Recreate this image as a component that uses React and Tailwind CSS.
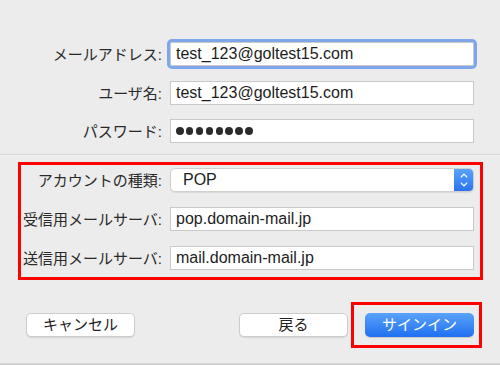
import { ChevronDown, ChevronUp } from "lucide-react";

const font = {
  jp: "font-['Helvetica','Liberation_Sans','Noto_Sans_CJK_JP',sans-serif]",
};

function Label({ children, className = "" }) {
  return (
    <div
      className={`shrink-0 text-right text-[15px] leading-none text-[#2a2a2a] ${className}`}
    >
      {children}
    </div>
  );
}

function Field({ children, focused = false }) {
  return (
    <div
      className={`ml-[8px] flex h-[24px] w-[304px] items-center border border-[#c9c9c9] bg-white pl-[5px] text-[16px] text-[#1d1d1d] ${
        focused ? "rounded-[2px] outline-[3px] outline-[#7fa6ea] outline-offset-0 border-[#9db8e6]" : ""
      }`}
    >
      {children}
    </div>
  );
}

function Popup({ value }) {
  return (
    <div className="ml-[8px] flex h-[24px] w-[304px] items-stretch rounded-[5px] border border-[#cfcfcf] bg-white shadow-[0_1px_1px_rgba(0,0,0,0.08)]">
      <div className="flex flex-1 items-center pl-[12px] text-[16px] text-[#1d1d1d]">
        {value}
      </div>
      <div className="flex w-[19px] flex-col items-center justify-center rounded-r-[4px] bg-gradient-to-b from-[#5ba2f8] to-[#2a73ef]">
        <ChevronUp className="-mb-[2px] h-[11px] w-[12px] text-white" strokeWidth={3} />
        <ChevronDown className="h-[11px] w-[12px] text-white" strokeWidth={3} />
      </div>
    </div>
  );
}

function Button({ children, primary = false }) {
  return (
    <button
      type="button"
      className={`flex h-[24px] w-[109px] items-center justify-center rounded-[5px] text-[15px] ${
        primary
          ? "bg-gradient-to-b from-[#5aa2f9] to-[#1f6ff1] text-white shadow-[0_1px_1px_rgba(0,0,0,0.15)]"
          : "border border-[#cdcdcd] bg-white text-[#222] shadow-[0_1px_1px_rgba(0,0,0,0.1)]"
      }`}
    >
      {children}
    </button>
  );
}

export default function App() {
  return (
    <div
      className={`flex h-[365px] w-[500px] flex-col overflow-hidden bg-[#ececec] ${font.jp}`}
    >
      {/* account fields */}
      <div className="pt-[42px]">
        <div className="flex items-center">
          <Label className="w-[162px]">メールアドレス:</Label>
          <Field focused>test_123@goltest15.com</Field>
        </div>
        <div className="mt-[15px] flex items-center">
          <Label className="w-[162px]">ユーザ名:</Label>
          <Field>test_123@goltest15.com</Field>
        </div>
        <div className="mt-[14px] flex items-center">
          <Label className="w-[162px]">パスワード:</Label>
          <Field>
            <div className="flex gap-[2.4px]">
              {[0, 1, 2, 3, 4, 5, 6, 7].map((i) => (
                <span key={i} className="h-[7.5px] w-[7.5px] rounded-full bg-[#2b2b2b]" />
              ))}
            </div>
          </Field>
        </div>
      </div>

      <div className="mt-[11px] h-[1px] bg-[#d6d6d6]" />
      <div className="h-[1px] bg-[#f3f3f3]" />

      {/* server settings */}
      <div className="ml-[18px] mt-[6px] h-[118px] w-[465px] border-[3px] border-[#ff0000] pt-[3px]">
        <div className="flex items-center">
          <Label className="w-[141px]">アカウントの種類:</Label>
          <Popup value="POP" />
        </div>
        <div className="mt-[15px] flex items-center">
          <Label className="w-[141px]">受信用メールサーバ:</Label>
          <Field>pop.domain-mail.jp</Field>
        </div>
        <div className="mt-[15px] flex items-center">
          <Label className="w-[141px]">送信用メールサーバ:</Label>
          <Field>mail.domain-mail.jp</Field>
        </div>
      </div>

      {/* buttons */}
      <div className="mt-[22px] flex items-center">
        <div className="ml-[26px]">
          <Button>キャンセル</Button>
        </div>
        <div className="ml-[104px]">
          <Button>戻る</Button>
        </div>
        <div className="ml-[3px] h-[46px] w-[131px] border-[3px] border-[#ff0000] pl-[11px] pt-[8px]">
          <Button primary>サインイン</Button>
        </div>
      </div>

      <div className="mt-auto h-[2px] bg-[#d2d2d2]" />
    </div>
  );
}
